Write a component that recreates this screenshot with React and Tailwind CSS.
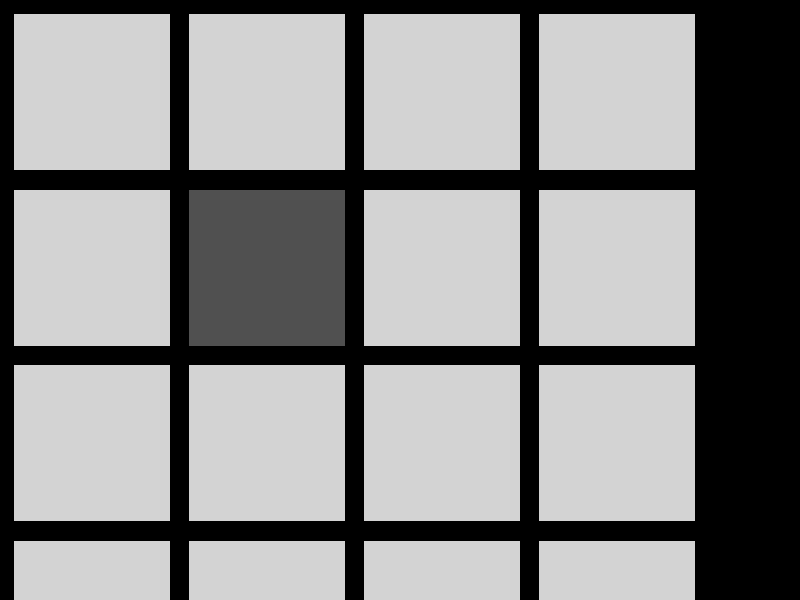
import React from 'react';

const tiles = Array.from({ length: 16 }, (_, i) => i);

const App = () => {
  return (
    <div className="h-screen overflow-y-scroll bg-black [scrollbar-width:auto] [scrollbar-color:#d6d3ce_#ebe9e5] [&::-webkit-scrollbar]:w-[14px] [&::-webkit-scrollbar-track]:bg-[#ebe9e5] [&::-webkit-scrollbar-thumb]:bg-[#d6d3ce] [&::-webkit-scrollbar-thumb]:border [&::-webkit-scrollbar-thumb]:border-[#8f8d89]">
      <div className="px-[14px] pt-[14px] pb-[20px]">
        {/* 4x4 board, one tile selected */}
        <div className="grid grid-cols-[repeat(4,156px)] auto-rows-[156px] gap-x-[19px] gap-y-[19.5px]">
          {tiles.map((i) => (
            <div
              key={i}
              className={i === 5 ? 'bg-[#505050]' : 'bg-[#d3d3d3]'}
            />
          ))}
        </div>
      </div>
    </div>
  );
};

export default App;
